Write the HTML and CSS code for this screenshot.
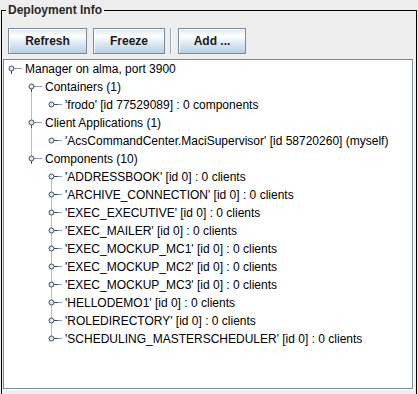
FILE: index.html
```html
<!DOCTYPE html>
<html>
<head>
<meta charset="utf-8">
<title>Deployment Info</title>
<link rel="stylesheet" href="styles.css">
</head>
<body>
<svg class="defs" width="0" height="0" aria-hidden="true">
  <defs>
    <g id="exp">
      <line x1="10" y1="8.5" x2="18" y2="8.5" class="leg"/>
      <line x1="7.5" y1="10" x2="7.5" y2="14" class="stem"/>
      <circle cx="7.5" cy="8.5" r="2.5" class="knob"/>
    </g>
    <g id="col">
      <line x1="14" y1="8.5" x2="18" y2="8.5" class="leg"/>
      <line x1="10" y1="8.5" x2="14" y2="8.5" class="stem"/>
      <circle cx="7.5" cy="8.5" r="2.5" class="knob"/>
    </g>
  </defs>
</svg>

<fieldset class="panel">
  <legend class="panel-title">Deployment Info</legend>
  <div class="toolbar">
    <button class="btn btn-refresh">Refresh</button>
    <button class="btn btn-freeze">Freeze</button>
    <span class="sep"></span>
    <button class="btn btn-add">Add ...</button>
  </div>
  <div class="scroll">
    <div class="tree">
      <div class="row"><span class="cell"><svg class="ic" viewBox="0 0 20 18"><use href="#exp"/></svg></span><span class="label">Manager on alma, port 3900</span></div>
      <div class="row"><span class="cell"></span><span class="cell v-bot"><svg class="ic" viewBox="0 0 20 18"><use href="#exp"/></svg></span><span class="label">Containers (1)</span></div>
      <div class="row"><span class="cell"></span><span class="cell v-full"></span><span class="cell"><svg class="ic" viewBox="0 0 20 18"><use href="#col"/></svg></span><span class="label">'frodo' [id 77529089] : 0 components</span></div>
      <div class="row"><span class="cell"></span><span class="cell v-full"><svg class="ic" viewBox="0 0 20 18"><use href="#exp"/></svg></span><span class="label">Client Applications (1)</span></div>
      <div class="row"><span class="cell"></span><span class="cell v-full"></span><span class="cell"><svg class="ic" viewBox="0 0 20 18"><use href="#col"/></svg></span><span class="label">'AcsCommandCenter.MaciSupervisor' [id 58720260] (myself)</span></div>
      <div class="row"><span class="cell"></span><span class="cell v-top"><svg class="ic" viewBox="0 0 20 18"><use href="#exp"/></svg></span><span class="label">Components (10)</span></div>
      <div class="row"><span class="cell"></span><span class="cell"></span><span class="cell v-bot"><svg class="ic" viewBox="0 0 20 18"><use href="#col"/></svg></span><span class="label">'ADDRESSBOOK' [id 0] : 0 clients</span></div>
      <div class="row"><span class="cell"></span><span class="cell"></span><span class="cell v-full"><svg class="ic" viewBox="0 0 20 18"><use href="#col"/></svg></span><span class="label">'ARCHIVE_CONNECTION' [id 0] : 0 clients</span></div>
      <div class="row"><span class="cell"></span><span class="cell"></span><span class="cell v-full"><svg class="ic" viewBox="0 0 20 18"><use href="#col"/></svg></span><span class="label">'EXEC_EXECUTIVE' [id 0] : 0 clients</span></div>
      <div class="row"><span class="cell"></span><span class="cell"></span><span class="cell v-full"><svg class="ic" viewBox="0 0 20 18"><use href="#col"/></svg></span><span class="label">'EXEC_MAILER' [id 0] : 0 clients</span></div>
      <div class="row"><span class="cell"></span><span class="cell"></span><span class="cell v-full"><svg class="ic" viewBox="0 0 20 18"><use href="#col"/></svg></span><span class="label">'EXEC_MOCKUP_MC1' [id 0] : 0 clients</span></div>
      <div class="row"><span class="cell"></span><span class="cell"></span><span class="cell v-full"><svg class="ic" viewBox="0 0 20 18"><use href="#col"/></svg></span><span class="label">'EXEC_MOCKUP_MC2' [id 0] : 0 clients</span></div>
      <div class="row"><span class="cell"></span><span class="cell"></span><span class="cell v-full"><svg class="ic" viewBox="0 0 20 18"><use href="#col"/></svg></span><span class="label">'EXEC_MOCKUP_MC3' [id 0] : 0 clients</span></div>
      <div class="row"><span class="cell"></span><span class="cell"></span><span class="cell v-full"><svg class="ic" viewBox="0 0 20 18"><use href="#col"/></svg></span><span class="label">'HELLODEMO1' [id 0] : 0 clients</span></div>
      <div class="row"><span class="cell"></span><span class="cell"></span><span class="cell v-full"><svg class="ic" viewBox="0 0 20 18"><use href="#col"/></svg></span><span class="label">'ROLEDIRECTORY' [id 0] : 0 clients</span></div>
      <div class="row"><span class="cell"></span><span class="cell"></span><span class="cell v-top"><svg class="ic" viewBox="0 0 20 18"><use href="#col"/></svg></span><span class="label">'SCHEDULING_MASTERSCHEDULER' [id 0] : 0 clients</span></div>
    </div>
  </div>
</fieldset>
</body>
</html>
```

FILE: styles.css
```css
html, body {
  margin: 0;
  padding: 0;
  background: #eeeeee;
  overflow: hidden;
}

body {
  font-family: "Liberation Sans", Arial, sans-serif;
  font-size: 12px;
  color: #000;
}

.defs {
  position: absolute;
  width: 0;
  height: 0;
}

.panel {
  margin: 3px 1px 0 1px;
  padding: 0 0 6px 0;
  border: 1px solid #000;
  min-width: 0;
}

.panel-title {
  margin-left: 4px;
  padding: 0 2px;
  font-weight: bold;
  font-size: 12px;
  line-height: 14px;
  color: #2a2a2a;
}

.toolbar {
  display: flex;
  align-items: stretch;
  gap: 5px;
  padding: 11px 0 0 6px;
  height: 26px;
}

.btn {
  box-sizing: border-box;
  height: 26px;
  margin: 0;
  padding: 0;
  border: 1px solid #7a8a99;
  box-shadow: inset 1px 1px 0 #ffffff;
  background: linear-gradient(#dde8f3 0%, #ffffff 30%, #dde8f3 60%, #b8cfe5 100%);
  font-family: "Liberation Sans", Arial, sans-serif;
  font-weight: bold;
  font-size: 12px;
  color: #1a1a1a;
}

.btn-refresh { width: 79px; margin-right: 1px; }
.btn-freeze { width: 72px; }
.btn-add { width: 68px; margin-left: 1px; }

.sep {
  width: 1px;
  border-left: 1px solid #9aabbb;
  background: #ffffff;
}

.scroll {
  margin: 5px 3px 0 1px;
  height: 328px;
  border: 1px solid #7a8a99;
  box-shadow: 1px 1px 0 #ffffff;
  background: #ffffff;
  overflow: hidden;
}

.tree {
  display: flex;
  flex-direction: column;
}

.row {
  display: flex;
  height: 18px;
  line-height: 18px;
  white-space: nowrap;
}

.cell {
  flex: 0 0 20px;
  width: 20px;
  height: 18px;
  background-repeat: no-repeat;
}

.v-full {
  background-image: linear-gradient(#b4bfca, #b4bfca);
  background-position: 7px 0;
  background-size: 1px 18px;
}

.v-top {
  background-image: linear-gradient(#b4bfca, #b4bfca);
  background-position: 7px 0;
  background-size: 1px 9px;
}

.v-bot {
  background-image: linear-gradient(#b4bfca, #b4bfca);
  background-position: 7px 9px;
  background-size: 1px 9px;
}

.ic {
  display: block;
  width: 20px;
  height: 18px;
}

.leg {
  stroke: #8e98a3;
  stroke-width: 1;
}

.stem {
  stroke: #3e4c63;
  stroke-width: 1;
}

.knob {
  fill: #dfe7f0;
  stroke: #3e4c63;
  stroke-width: 1;
}

.label {
  padding-left: 1px;
  color: #000;
}
```
